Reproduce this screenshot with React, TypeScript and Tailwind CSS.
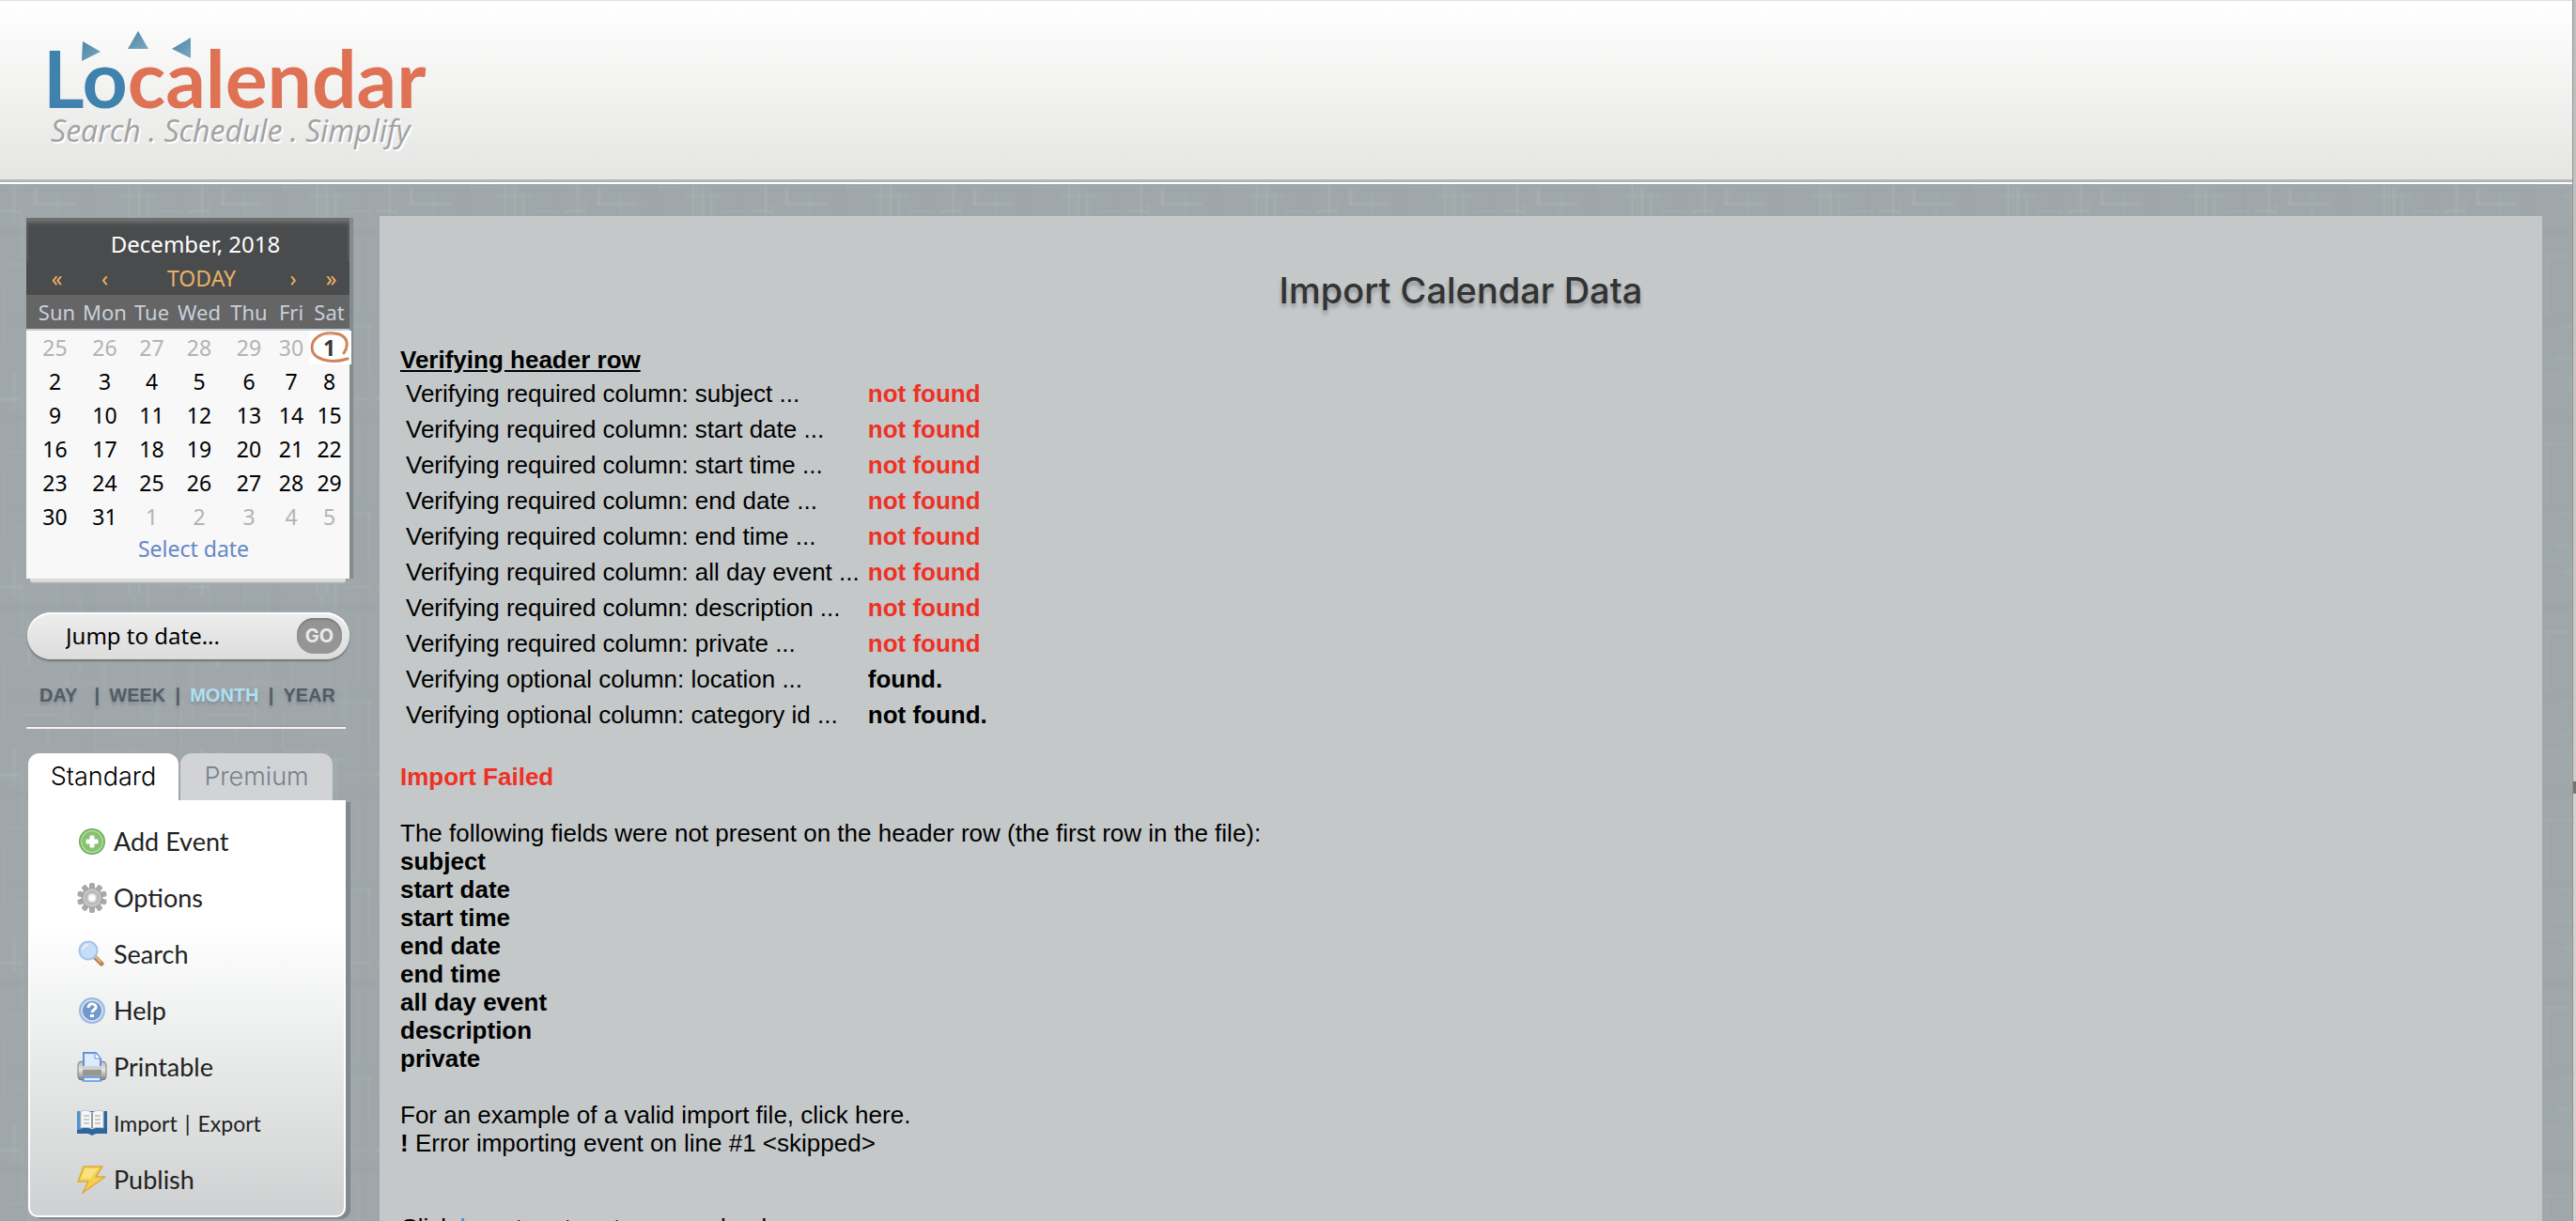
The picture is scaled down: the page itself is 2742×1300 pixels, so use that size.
import type { ReactNode } from "react";

const weekdays = ["Sun", "Mon", "Tue", "Wed", "Thu", "Fri", "Sat"];
const weeks = [
  [25, 26, 27, 28, 29, 30, 1],
  [2, 3, 4, 5, 6, 7, 8],
  [9, 10, 11, 12, 13, 14, 15],
  [16, 17, 18, 19, 20, 21, 22],
  [23, 24, 25, 26, 27, 28, 29],
  [30, 31, 1, 2, 3, 4, 5],
];

const checks = [
  ["required", "subject", "not found"],
  ["required", "start date", "not found"],
  ["required", "start time", "not found"],
  ["required", "end date", "not found"],
  ["required", "end time", "not found"],
  ["required", "all day event", "not found"],
  ["required", "description", "not found"],
  ["required", "private", "not found"],
  ["optional", "location", "found."],
  ["optional", "category id", "not found."],
];

const missing = checks.filter((c) => c[0] === "required").map((c) => c[1]);

/* Soft woven threads, [x, y, width, height, opacity] within a 200px tile */
const threads = [
  [14, 0, 2, 40, 0.16], [22, 20, 2, 60, 0.1], [36, 4, 3, 18, 0.16], [36, 20, 44, 2, 0.18], [60, 10, 2, 90, 0.08],
  [84, 40, 2, 80, 0.1], [137, 0, 2, 40, 0.16], [142, 0, 2, 60, 0.1], [147, 2, 2, 34, 0.18], [156, 10, 2, 44, 0.16],
  [128, 12, 40, 2, 0.1], [168, 28, 28, 2, 0.14], [0, 28, 22, 2, 0.18], [100, 2, 26, 2, 0.12], [180, 60, 2, 70, 0.12],
  [110, 80, 2, 60, 0.12], [96, 76, 60, 2, 0.14], [10, 84, 50, 2, 0.12], [30, 64, 2, 50, 0.16], [4, 110, 2, 60, 0.14],
  [44, 130, 60, 2, 0.12], [70, 120, 2, 60, 0.12], [150, 110, 2, 60, 0.14], [126, 150, 70, 2, 0.12], [166, 130, 2, 56, 0.1],
  [20, 164, 46, 2, 0.14], [100, 166, 2, 34, 0.14], [120, 184, 50, 2, 0.1], [192, 150, 2, 50, 0.14], [50, 176, 2, 24, 0.12],
];

function Linen() {
  return (
    <svg className="absolute inset-0 h-full w-full" aria-hidden="true">
      <defs>
        <filter id="soft" x="0" y="0" width="100%" height="100%">
          <feGaussianBlur stdDeviation="1" />
        </filter>
        <pattern id="weave" width="200" height="200" y="196" patternUnits="userSpaceOnUse">
          <g fill="#c9cfc9" filter="url(#soft)">
            {threads.map(([x, y, w, h, o], i) => (
              <rect key={i} x={x} y={y} width={w} height={h} opacity={o * 1.3} />
            ))}
          </g>
          <g fill="#8b969a">
            <rect x="0" y="46" width="200" height="8" opacity="0.1" />
            <rect x="0" y="140" width="200" height="10" opacity="0.08" />
            <rect x="88" y="0" width="12" height="200" opacity="0.08" />
            <rect x="186" y="0" width="5" height="200" opacity="0.08" />
          </g>
        </pattern>
      </defs>
      <rect width="100%" height="100%" fill="url(#weave)" />
    </svg>
  );
}

function Logo() {
  return (
    <a href="#home" className="relative block w-fit pt-[42px] pl-[46px]" aria-label="Localendar home">
      <svg className="absolute top-8 left-[85px] h-8 w-[122px]" viewBox="0 0 122 32" aria-hidden="true">
        <defs>
          <linearGradient id="tri" x1="0" y1="0" x2="1" y2="1">
            <stop offset="0" stopColor="#4d85a6" />
            <stop offset="1" stopColor="#7aa9c0" />
          </linearGradient>
        </defs>
        <path d="M3 11 22 22 2 32Z" fill="url(#tri)" />
        <path d="M62 0 73 19H51Z" fill="url(#tri)" />
        <path d="M118 7v22L98 19Z" fill="url(#tri)" />
      </svg>
      <span className="block font-['Lato'] text-[84px] leading-[80px] font-bold text-[#df7154]">
        <span className="text-[#3f82ae]">Lo</span>calendar
      </span>
      <span className="block pl-2 font-['Open_Sans'] text-[32px] leading-8 text-[#a2a2a2] italic [text-shadow:2px_2px_1px_#fff]">
        Search . Schedule . Simplify
      </span>
    </a>
  );
}

function MiniCalendar() {
  return (
    <section className="ml-7 w-[344px] font-['Noto_Sans']" aria-label="Date picker">
      <div className="bg-[#f8f8f8] shadow-[4px_0_1px_#848c8f]">
        <table className="w-full table-fixed border-collapse text-center text-[23px] leading-9">
          <colgroup>
            <col className="w-[57px]" />
            <col className="w-[53px]" />
            <col className="w-[47px]" />
            <col className="w-[54px]" />
            <col className="w-[52px]" />
            <col className="w-[38px]" />
            <col className="w-[43px]" />
          </colgroup>
          <thead className="bg-[#4a4b4c]">
            <tr className="text-white shadow-[inset_0_5px_4px_#6f7273]">
              <th colSpan={7} className="p-0 pt-[10px] pl-4 text-[24px] font-normal">December, 2018</th>
            </tr>
            <tr className="text-[#e8b067]">
              <td className="p-0 pl-2"><button aria-label="Previous year">«</button></td>
              <td className="p-0"><button aria-label="Previous month">‹</button></td>
              <td className="p-0" colSpan={3}><button>TODAY</button></td>
              <td className="p-0 pl-1"><button aria-label="Next month">›</button></td>
              <td className="p-0 pl-1"><button aria-label="Next year">»</button></td>
            </tr>
            <tr className="border-b-2 border-[#c5ccd5] bg-[#656565] text-[22px] text-[#c9cfda]">
              {weekdays.map((d) => (
                <th key={d} className="p-0 font-normal whitespace-nowrap first:pl-2">{d}</th>
              ))}
            </tr>
          </thead>
          <tbody>
            {weeks.map((week, w) => (
              <tr key={w}>
                {week.map((day, i) => {
                  const today = w === 0 && day === 1;
                  const outside = (w === 0 && day > 20) || (w === 5 && day < 20);
                  return (
                    <td key={i} className={today ? "relative p-0 font-bold text-[#333b3b]" : outside ? "p-0 text-[#b3b3b3] first:pl-1" : "p-0 text-black first:pl-1"}>
                      {today && (
                        <svg className="absolute top-0 left-0 h-9 w-[45px]" viewBox="0 0 45 36" fill="none" aria-hidden="true">
                          <rect width="45" height="36" fill="#fff" />
                          <path d="M37 24C43 15 41 4 27 3 12 1 3 9 3 18c0 12 18 18 38 12" stroke="#cf8459" strokeWidth="3" strokeLinecap="round" />
                          <path d="M6 12C11 5 18 3 26 4" stroke="#e4b793" strokeWidth="1" />
                        </svg>
                      )}
                      <span className="relative">{day}</span>
                    </td>
                  );
                })}
              </tr>
            ))}
          </tbody>
        </table>
        <div className="pb-4 pl-3 text-center text-[23px] leading-8">
          <a href="#select" className="text-[#6488c8]">Select date</a>
        </div>
      </div>
      <div className="mx-1 h-[6px] rounded-b border-b-2 border-[#abadad] bg-[#d9dada]" />
    </section>
  );
}

const iconClass = "h-8 w-8 shrink-0";

const icons: Record<string, ReactNode> = {
  add: (
    <svg className={iconClass} viewBox="0 0 32 32" aria-hidden="true">
      <circle cx="16" cy="16" r="14" fill="#6fae5b" />
      <circle cx="16" cy="16" r="11.500" fill="#86c272" stroke="#b3dba3" strokeWidth="1.500" />
      <path d="M14 10h4v4h4v4h-4v4h-4v-4h-4v-4h4Z" fill="#fff" stroke="#fff" strokeLinejoin="round" />
    </svg>
  ),
  gear: (
    <svg className={iconClass} viewBox="0 0 32 32" aria-hidden="true">
      <g fill="#a9a9a9">
        {[0, 36, 72, 108, 144].map((a) => (
          <rect key={a} x="13" y="0" width="6" height="32" rx="2" transform={`rotate(${a} 16 16)`} />
        ))}
      </g>
      <circle cx="16" cy="16" r="10.500" fill="#c3c3c3" stroke="#9c9c9c" />
      <circle cx="16" cy="16" r="6" fill="#d8d8d8" stroke="#a5a5a5" />
      <circle cx="16" cy="16" r="3.500" fill="#fff" />
    </svg>
  ),
  search: (
    <svg className={iconClass} viewBox="0 0 32 32" aria-hidden="true">
      <path d="m19 19 7 7" stroke="#bd8350" strokeWidth="5" strokeLinecap="round" />
      <path d="m19 18 6 6" stroke="#e2b88c" strokeWidth="2" strokeLinecap="round" />
      <circle cx="12" cy="12" r="9.500" fill="#c6ddf5" stroke="#a3c4ea" strokeWidth="2" />
      <path d="M6 11c1-3 3-5 6-5" stroke="#e9f3fd" strokeWidth="2" fill="none" />
    </svg>
  ),
  help: (
    <svg className={iconClass} viewBox="0 0 32 32" aria-hidden="true">
      <circle cx="16" cy="16" r="14" fill="#9db9e0" />
      <circle cx="16" cy="16" r="11" fill="#7398cb" stroke="#dbe7f7" strokeWidth="1.500" />
      <path d="M12 13c0-6 9-5 8 0-1 2-4 3-4 5" fill="none" stroke="#fff" strokeWidth="3" />
      <rect x="14" y="20" width="4" height="3" fill="#fff" />
    </svg>
  ),
  printer: (
    <svg className={iconClass} viewBox="0 0 32 32" aria-hidden="true">
      <defs>
        <linearGradient id="metal" x1="0" y1="0" x2="0" y2="1">
          <stop offset="0" stopColor="#b8b8b8" />
          <stop offset="0.45" stopColor="#e6e6e6" />
          <stop offset="1" stopColor="#7d7d7d" />
        </linearGradient>
      </defs>
      <rect x="1" y="10" width="30" height="20" rx="4" fill="url(#metal)" stroke="#7e7e7e" />
      <path d="M7 1h13l5 6v9H7Z" fill="#dceafb" stroke="#5f95da" strokeWidth="2" />
      <path d="M19 1v6h6" fill="#fff" stroke="#5f95da" />
      <rect x="6" y="15" width="20" height="4" fill="#d2d2d2" />
      <rect x="6" y="19" width="20" height="6" fill="#979797" />
      <rect x="7" y="27" width="18" height="4" fill="#e4effc" stroke="#5f95da" strokeWidth="1.500" />
    </svg>
  ),
  book: (
    <svg className={iconClass} viewBox="0 0 32 32" aria-hidden="true">
      <path d="M0 3h32v24H20l-4 2-4-2H0Z" fill="#2f659f" />
      <path d="M0 3h4v20H0Z" fill="#5590c8" />
      <path d="M4 3c4-1 9-1 12 2 3-3 8-3 12-2v18c-4-1-9-1-12 1-3-2-8-2-12-1Z" fill="#f6f6f4" stroke="#b9c6d4" />
      <path d="M16 5v16" stroke="#999" strokeWidth="2" />
      <path d="M7 8h6M7 12h6M7 16h6M19 8h6M19 12h6M19 16h6" stroke="#bbb" strokeWidth="1.500" />
    </svg>
  ),
  bolt: (
    <svg className={iconClass} viewBox="0 0 32 32" aria-hidden="true">
      <path d="M7 2h20l-7 11h10L6 30l6-12H1Z" fill="#f3cf52" stroke="#dfa93c" strokeWidth="1.500" strokeLinejoin="round" />
      <path d="M9 4h14L14 15H4Z" fill="#f9e27e" />
    </svg>
  ),
};

const menu = [
  ["add", "Add Event"],
  ["gear", "Options"],
  ["search", "Search"],
  ["help", "Help"],
  ["printer", "Printable"],
  ["book", "Import"],
  ["bolt", "Publish"],
];

function Sidebar() {
  return (
    <aside className="w-[404px] shrink-0 pt-9">
      <MiniCalendar />

      <form className="mt-[30px] ml-[29px] flex h-[50px] w-[343px] items-center rounded-full bg-linear-to-b from-[#eeeeee] to-[#dcdcdc] pr-2 shadow-[0_2px_2px_#6f7678,inset_0_2px_1px_#ffffff]">
        <input
          type="text"
          aria-label="Jump to date"
          defaultValue="Jump to date..."
          className="min-w-0 flex-1 bg-transparent pl-[41px] font-['Noto_Sans'] text-[24px] leading-8 text-black outline-none"
        />
        <button type="button" className="h-[38px] w-12 rounded-[18px] bg-[#959595] font-['Inter'] text-[20px] font-bold text-[#e9e9e9] shadow-[inset_0_2px_2px_#7c7c7c]">
          GO
        </button>
      </form>

      <nav className="mt-[22px] ml-[42px] flex w-[315px] items-center justify-between font-['Liberation_Sans'] text-[20px] leading-8 font-bold text-[#545b67] [text-shadow:0_3px_3px_#858d90]">
        <a href="#day">DAY</a>
        <span className="pl-2">|</span>
        <a href="#week">WEEK</a>
        <span>|</span>
        <a href="#month" className="text-[#aee0f4]">MONTH</a>
        <span>|</span>
        <a href="#year">YEAR</a>
      </nav>
      <hr className="mt-4 ml-7 h-1 w-[340px] border-t-2 border-b-2 border-t-[#a09a9c] border-b-[#f2f2f4]" />

      <div className="mt-[26px] ml-[30px] flex gap-[2px] font-['Inter'] text-[27px] leading-[50px] font-light [text-shadow:0_3px_3px_#0002]" role="tablist">
        <button role="tab" aria-selected="true" className="w-40 rounded-t-xl bg-white text-black">Standard</button>
        <button role="tab" aria-selected="false" className="w-[162px] rounded-t-xl bg-[#d1d3d5] text-[#75808f]">Premium</button>
      </div>
      <ul className="ml-[30px] w-[338px] rounded-b-[10px] border-2 border-t-0 border-white bg-linear-to-b from-white from-30% via-[#e2e4e4] via-72% to-[#cfd0d1] pt-[14px] pb-2 font-['Lato'] text-[27px] text-[#222] shadow-[5px_2px_1px_#82888b]">
        {menu.map(([icon, label]) => (
          <li key={label} className="flex h-[60px] items-center gap-[7px] pl-[50px]">
            {icons[icon]}
            {label === "Import" ? (
              <span className="flex gap-2 text-[23px]">
                <a href="#import">Import</a>
                <span>|</span>
                <a href="#export">Export</a>
              </span>
            ) : (
              <a href={"#" + icon}>{label}</a>
            )}
          </li>
        ))}
      </ul>
    </aside>
  );
}

export default function App() {
  return (
    <div className="flex h-screen overflow-hidden">
      <div className="relative flex min-w-0 flex-1 flex-col overflow-hidden bg-[#9fa7aa]">
        <Linen />
        <header className="relative h-[196px] shrink-0 border-t border-[#e2e2e2] bg-white">
          <div className="h-[190px] bg-linear-to-b from-white via-[#f2f2f1] via-50% to-[#e5e5e3]">
            <Logo />
          </div>
          <div className="h-[3px] bg-[#b2b8b8]" />
        </header>
        <div className="relative flex min-h-0 flex-1">
          <Sidebar />
          <main className="mt-[34px] mr-8 min-w-0 flex-1 overflow-hidden bg-[#c4c8c9] px-[22px] pt-[54px] font-['Liberation_Sans'] text-[26px] leading-[30px] text-black">
            <h1 className="text-center font-['Inter'] text-[38px] leading-[50px] font-medium text-[#333] [text-shadow:0_4px_4px_#0004]">
              Import Calendar Data
            </h1>
            <h2 className="mt-[34px] font-bold underline">Verifying header row</h2>
            <table className="border-separate border-spacing-1">
              <tbody>
                {checks.map(([kind, name, result]) => (
                  <tr key={name}>
                    <td className="p-[2px] pr-[3px]">
                      Verifying {kind} column: {name} ...
                    </td>
                    <td className={kind === "required" ? "p-[2px] font-bold text-[#ee3124]" : "p-[2px] font-bold"}>{result}</td>
                  </tr>
                ))}
              </tbody>
            </table>
            <p className="mt-[30px] font-bold text-[#ee3124]">Import Failed</p>
            <p className="mt-[30px]">The following fields were not present on the header row (the first row in the file):</p>
            <ul className="font-bold">
              {missing.map((m) => (
                <li key={m}>{m}</li>
              ))}
            </ul>
            <p className="mt-[30px]">
              For an example of a valid import file, <a href="#example">click here</a>.
            </p>
            <p>
              <b>!</b> Error importing event on line #1 &lt;skipped&gt;
            </p>
            <p className="mt-[60px]">
              Click <a href="#calendar" className="text-[#2f8fd0]">here</a> to return to your calendar.
            </p>
          </main>
        </div>
      </div>
      <div className="w-1 shrink-0 border-l border-[#939393] bg-[linear-gradient(#bdbdbd,#cfcdca_64%,#6f6f6f_64%,#7a7a7a_65%,#d3d1ce_65%)]" />
    </div>
  );
}
